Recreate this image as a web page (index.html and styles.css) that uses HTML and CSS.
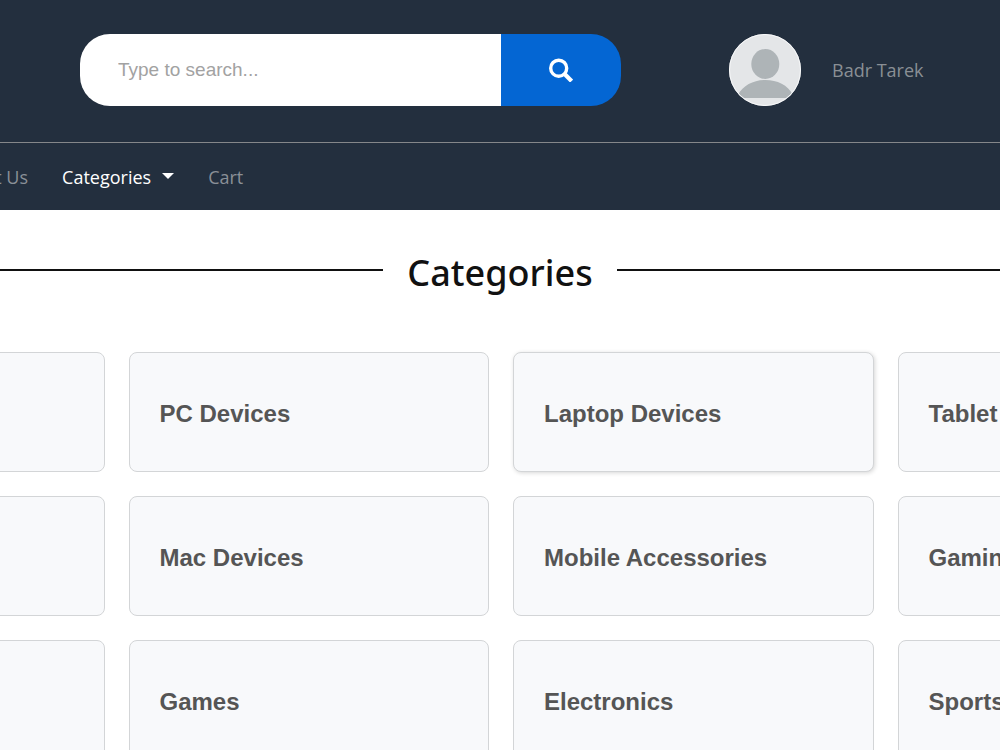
FILE: index.html
```html
<!DOCTYPE html>
<html lang="en">
  <head>
    <meta charset="UTF-8" />
    <meta name="viewport" content="width=device-width, initial-scale=1.0" />
    <title>Categories</title>
    <link rel="stylesheet" href="styles.css">
  </head>

  <body>
    <header class="header">
      <div class="top-bar">
        <form class="search">
          <input type="search" class="search-input" placeholder="Type to search..." aria-label="Search" />
          <button type="submit" class="search-btn" aria-label="Search">
            <svg viewBox="0 0 24 24" width="24" height="24" aria-hidden="true">
              <circle cx="9.7" cy="10.2" r="8" fill="none" stroke="#fff" stroke-width="3.4" />
              <path d="M15.6 16.1 L22.6 23.1" fill="none" stroke="#fff" stroke-width="4.2" />
            </svg>
          </button>
        </form>

        <a href="#" class="user">
          <svg class="avatar" viewBox="0 0 72 72" width="72" height="72" aria-hidden="true">
            <clipPath id="avatar-clip"><circle cx="36" cy="36" r="36" /></clipPath>
            <g clip-path="url(#avatar-clip)">
              <rect width="72" height="72" fill="#e4e6e8" />
              <ellipse cx="36.3" cy="30" rx="14" ry="15" fill="#aeb4b7" />
              <path d="M6 64 L9 61 C14 51 25 46 36.5 46 C48 46 59 51 64 61 L66 64 Z" fill="#aeb4b7" />
            </g>
            <circle cx="36" cy="36" r="35.5" fill="none" stroke="#f8f9fa" stroke-width="1" />
          </svg>
          <span>Badr Tarek</span>
        </a>
      </div>

      <nav class="navbar">
        <ul class="nav-list">
          <li><a href="#" class="nav-link">About Us</a></li>
          <li><a href="#" class="nav-link dropdown active">Categories</a></li>
          <li><a href="#" class="nav-link">Cart</a></li>
        </ul>
      </nav>
    </header>

    <main>
      <h1 class="title">Categories</h1>

      <div class="cards">
        <div class="card"></div>
        <a href="#" class="card">PC Devices</a>
        <a href="#" class="card raised">Laptop Devices</a>
        <a href="#" class="card">Tablet</a>
        <div class="card"></div>
        <a href="#" class="card">Mac Devices</a>
        <a href="#" class="card">Mobile Accessories</a>
        <a href="#" class="card">Gaming</a>
        <div class="card"></div>
        <a href="#" class="card">Games</a>
        <a href="#" class="card">Electronics</a>
        <a href="#" class="card">Sports</a>
      </div>
    </main>
  </body>
</html>
```
FILE: styles.css
```css
* {
  box-sizing: border-box;
}

/* the page scrolls without a visible bar */
html {
  scrollbar-width: none;
}

body {
  margin: 0;
  background-color: #fff;
  color: #111;
  font-family: "Open Sans", "Noto Sans", sans-serif;
  overflow-x: hidden;
}

a {
  text-decoration: none;
}

.header {
  background-color: #232f3e;
}

.top-bar {
  display: flex;
  align-items: center;
  padding: 34px 60px 36px 80px;
  border-bottom: 1px solid #85878a;
}

.search {
  display: flex;
  flex: 0 1 541px;
  height: 72px;
  border-radius: 30px;
  overflow: hidden;
}

.search-input {
  flex: 1;
  min-width: 0;
  border: none;
  outline: none;
  padding: 0 38px;
  background-color: #fff;
  font-family: "Liberation Sans", Arial, sans-serif;
  font-size: 19px;
}

.search-input::placeholder {
  color: #a2a2a2;
}

.search-btn {
  display: flex;
  align-items: center;
  justify-content: center;
  width: 120px;
  padding: 0;
  border: none;
  background-color: #0466d3;
  cursor: pointer;
}

.user {
  display: flex;
  align-items: center;
  gap: 31px;
  margin-left: 108px;
  color: #8a8f95;
  font-size: 18px;
  white-space: nowrap;
}

.nav-list {
  display: flex;
  gap: 34px;
  margin: 0;
  margin-left: -49px;
  padding: 21px 0 19px;
  list-style: none;
}

.nav-link {
  display: flex;
  align-items: center;
  color: #8a9097;
  font-size: 18px;
  line-height: 27px;
  white-space: nowrap;
}

.nav-link.active {
  color: #fff;
}

.dropdown::after {
  content: "";
  margin-left: 11px;
  margin-bottom: 4px;
  border-top: 6px solid #fff;
  border-left: 6px solid transparent;
  border-right: 6px solid transparent;
}

.title {
  display: flex;
  align-items: center;
  gap: 24px;
  margin: 0;
  padding: 33px 0 49px;
  font-family: "Noto Sans", "Open Sans", sans-serif;
  font-size: 36px;
  font-weight: 500;
  line-height: 60px;
}

.title::before,
.title::after {
  content: "";
  flex: 1;
  height: 2px;
  margin-bottom: 6px;
  background-color: #111;
}

/* outer columns run off both sides */
.cards {
  display: grid;
  grid-template-columns: repeat(4, 1fr);
  gap: 24px;
  margin: 0 -258px 0 -256px;
}

.card {
  display: flex;
  align-items: center;
  min-height: 120px;
  padding: 4px 30px 0;
  border: 1px solid #d3d5d7;
  border-radius: 8px;
  background-color: #f8f9fb;
  color: #555;
  font-family: "Liberation Sans", Arial, sans-serif;
  font-size: 24px;
  font-weight: bold;
}

.card.raised,
.card:hover {
  box-shadow: 1px 1px 4px rgba(0, 0, 0, 0.16);
}
```
